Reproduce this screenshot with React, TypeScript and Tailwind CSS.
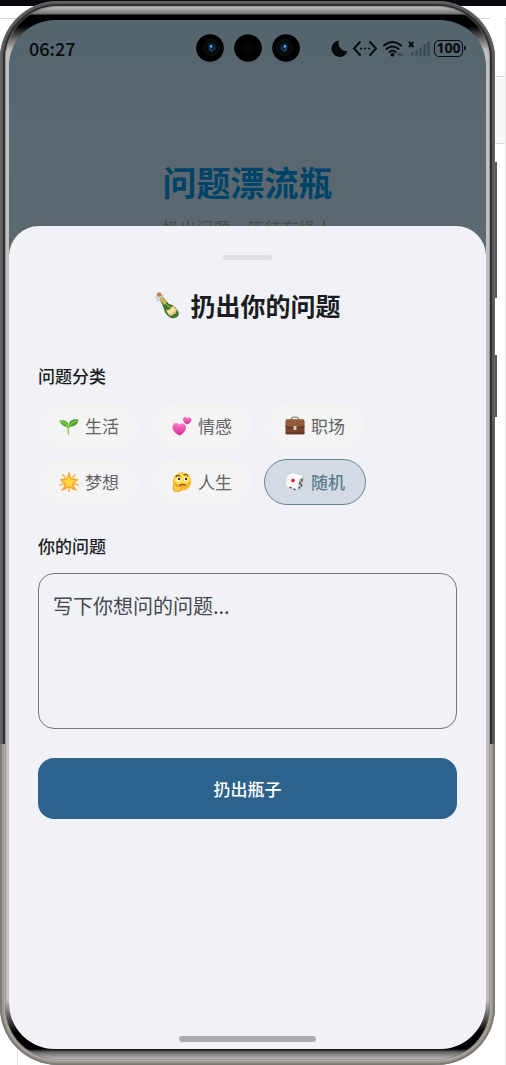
import { useState } from 'react'
import type { ReactNode } from 'react'
import clsx from 'clsx'

function Bottle() {
  return (
    <svg viewBox="0 0 26 28" className="h-7 w-[26px]" aria-hidden="true">
      <path d="M1 3l3 1 1-3 2 3 3-1-1 4 2 1-3 1-1 3-2-2-3 1 1-3-3-2 3-1z" fill="#d5d0d2" />
      <path d="M3 2l3-1 2 3-2 2-3-1z" fill="#b98750" />
      <path d="M6 8l3-2 6 7q6 1 9 7 2 4-1 6t-6 1q-6-3-7-9z" fill="#42762c" />
      <path d="M6 8l3-2 4 5-3 3z" fill="#d9b554" />
      <path d="M11 12l3 3q5 1 8 8" stroke="#a5c768" strokeWidth="1" fill="none" />
      <path d="M12 19q5 0 7-5l4 5q-2 5-7 6-3-3-4-6z" fill="#e7c781" />
      <path d="M13 20q4 0 6-4l2 3q-2 3-6 4z" fill="#f7e5ae" />
    </svg>
  )
}

function Seedling() {
  return (
    <svg viewBox="0 0 20 20" className="h-5 w-5" aria-hidden="true">
      <path d="M9.500 18C9 13 9.400 11 8 7.500M9.500 12Q11 8 14 7" fill="none" stroke="#8bc53f" strokeWidth="1.400" strokeLinecap="round" />
      <path d="M.5 4.500q7-1.500 9 3.500 0 2-1 3Q2.500 11 .5 4.500z" fill="#57ad2e" />
      <path d="M19.500 3.500q-8.500-1-9.500 4.500 0 2 1 2.800Q18.500 10.500 19.500 3.500z" fill="#4ba029" />
      <path d="M2 5.500q5 1 6.500 4.500M18 4.800q-5 1-7 4.700" stroke="#a6dc62" fill="none" />
    </svg>
  )
}

function Hearts() {
  return (
    <svg viewBox="0 0 20 20" className="h-5 w-5" aria-hidden="true">
      <defs>
        <linearGradient id="pink" x1="0" y1="0" x2="0" y2="1">
          <stop stopColor="#fa7ec4" />
          <stop offset="1" stopColor="#dc2496" />
        </linearGradient>
      </defs>
      <path d="M8 19.500C3 17.500 0 14 .5 10.500 1 6.500 5.500 6 7 9c2.500-3 7.500-1 7 3-.3 3-3 5.500-6 7.500z" fill="url(#pink)" />
      <path d="M15 8.500c-2.500-1.500-4.500-3.500-4-5.500.5-2.500 3.500-2.500 4-.5 1.500-2 4.800-1 4.500 1.500-.2 2-2.500 3.500-4.500 4.500z" fill="url(#pink)" />
    </svg>
  )
}

function Briefcase() {
  return (
    <svg viewBox="0 0 20 20" className="h-5 w-5" aria-hidden="true">
      <path d="M6 4q0-3 4-3t4 3" fill="none" stroke="#827066" strokeWidth="1.200" />
      <rect x=".5" y="3.500" width="19" height="15" rx="1.500" fill="#79452c" />
      <path d="M1 4.500q0-1 1-1h16q1 0 1 1v6q-9 3-18 0z" fill="#945a3b" />
      <path d="M.5 10.500q9.500 3 19 0" fill="none" stroke="#4c2b1c" />
      <path d="M.5 17h19" stroke="#57301f" />
      <rect x="8.500" y="10" width="3" height="4" rx="1" fill="#ced1d2" />
    </svg>
  )
}

function Star() {
  return (
    <svg viewBox="0 0 20 20" className="h-5 w-5" aria-hidden="true">
      <path d="M10 1v3M4 3l2 2M16 3l-2 2M1 13l3-1M19 13l-3-1M10 19v-2M3 18l2-2M17 18l-2-2" stroke="#f1b044" strokeWidth="1.700" strokeLinecap="round" />
      <path d="M10 2l2.500 4.800 6.500.7-4.700 4.200 1.200 6L10 15l-5.500 2.700 1.200-6L1 7.500l6.500-.7z" fill="#f9ad20" stroke="#f4a02b" strokeLinejoin="round" />
      <path d="M10 4l2 4 4.500.5-3.500 3 .8 4L10 13.500 6.200 15.500l.8-4-3.500-3L8 8z" fill="#ffd744" />
    </svg>
  )
}

function Thinking() {
  return (
    <svg viewBox="0 0 20 20" className="h-5 w-5" aria-hidden="true">
      <circle cx="10" cy="9.500" r="9.300" fill="#f9bd2f" />
      <ellipse cx="10" cy="7" rx="8" ry="6" fill="#ffdc52" />
      <path d="M4 4.500q2-2 4-.5M12 3q3-1.500 4 1M7.500 13.500q3-2 6-.5" fill="none" stroke="#754619" strokeWidth="1.200" strokeLinecap="round" />
      <ellipse cx="6.500" cy="7.500" rx="1.900" ry="2.100" fill="#fff" />
      <ellipse cx="13.500" cy="7.500" rx="1.900" ry="2.100" fill="#fff" />
      <circle cx="7" cy="7" r="1.200" fill="#4c2c15" />
      <circle cx="14" cy="7" r="1.200" fill="#4c2c15" />
      <path d="M2 12q1-1 2 0l1 3 5-1.500q2 0 1 1.500l-2 1q1 3-3 4-5 0-5-4z" fill="#ffc943" stroke="#d98820" strokeWidth=".7" />
    </svg>
  )
}

function Dice() {
  return (
    <svg viewBox="0 0 20 20" className="h-5 w-5" aria-hidden="true">
      <path d="M5 1.500Q6 .8 8 1.200L17 3.500q2 .6 1.900 2.500l-1.400 8q-.3 1.200-1.500 2l-3 2.500q-1 .8-2.500.3L3 15.500q-1.500-.5-1.500-2L2 5z" fill="#bfc1c4" />
      <path d="M5.500 1.500Q6.500 1 8 1.300L17 3.600q1.200.5.500 1.400L14 7.500 3 4z" fill="#fff" />
      <path d="M3.500 3.500l9 2.500q1.800.5 1.600 2.300l-1.400 8.500q-.4 1.800-2 1.300L2.700 15.300q-1.700-.5-1.500-2.300l.6-8q.2-1.900 1.700-1.500z" fill="#f7f7f8" />
      <circle cx="8" cy="8.500" r="1.800" fill="#d51e34" />
      <path d="M16.800 7.500v1.500M15 10.500v1.500M16.500 13v1M14.500 15.500v.500M5 15.500l1 .3M9 17l1 .3" stroke="#343538" strokeWidth="1.300" strokeLinecap="round" />
    </svg>
  )
}

const categories: { name: string; icon: ReactNode }[] = [
  { name: '生活', icon: <Seedling /> },
  { name: '情感', icon: <Hearts /> },
  { name: '职场', icon: <Briefcase /> },
  { name: '梦想', icon: <Star /> },
  { name: '人生', icon: <Thinking /> },
  { name: '随机', icon: <Dice /> },
]

function Camera({ lens, flip }: { lens?: boolean; flip?: boolean }) {
  return (
    <svg viewBox="0 0 28 28" className={clsx('h-7 w-7', flip && '-scale-x-100')} aria-hidden="true">
      <circle cx="14" cy="14" r="13.800" fill="#000" />
      {lens ? (
        <>
          <circle cx="15.500" cy="13.500" r="8" fill="#07090c" stroke="#101214" />
          <circle cx="16" cy="13" r="4.500" fill="#0b1a2c" />
          <path d="M13.500 14.500q1 2.500 3.500 2.500" stroke="#1f4c80" strokeWidth="1.200" fill="none" />
          <circle cx="15" cy="12.500" r="1.700" fill="#296eb0" />
          <circle cx="15" cy="12" r=".8" fill="#c4e6ff" />
          <circle cx="18" cy="14" r="1" fill="#1d4674" />
        </>
      ) : (
        <circle cx="14" cy="14" r="6" fill="#070707" />
      )}
    </svg>
  )
}

function StatusIcons() {
  return (
    <div className="flex items-center justify-end gap-1 text-[#080b0d]">
      <svg viewBox="0 0 17 17" className="h-[17px] w-[17px]" aria-hidden="true">
        <path d="M8 .5A8.200 8.200 0 1 0 16.500 11 8 8 0 0 1 8 .5z" fill="currentColor" />
      </svg>
      <svg viewBox="0 0 26 17" className="h-[17px] w-[26px]" aria-hidden="true">
        <path d="M8 2L2 8.500 8 15M18 2l6 6.500L18 15" fill="none" stroke="currentColor" strokeWidth="1.900" strokeLinecap="round" />
        <path d="M9 8.500h.1M13 8.500h.1M17 8.500h.1" stroke="currentColor" strokeWidth="2" strokeLinecap="round" />
      </svg>
      <svg viewBox="0 0 22 17" className="h-[17px] w-[22px]" aria-hidden="true">
        <path d="M2 5.500q8.500-7 17 0M4.500 9q6-5 12 0M7.500 12q3-2.500 6 0" fill="none" stroke="currentColor" strokeWidth="2" strokeLinecap="round" />
        <circle cx="10.500" cy="14.700" r="1.900" fill="currentColor" />
        <ellipse cx="18" cy="14.500" rx="3" ry="1.700" fill="#3e4c55" />
      </svg>
      <svg viewBox="0 0 22 17" className="h-[17px] w-[22px]" aria-hidden="true">
        <path d="M1 2l4.500 5M5.500 2L1 7" stroke="currentColor" strokeWidth="2" />
        <path d="M4.500 13v2M8.500 11v4M12.500 8.500V15M16.500 5.500V15M20.500 2.500V15" stroke="#3b4952" strokeWidth="2.400" strokeLinecap="round" />
      </svg>
      <div className="flex items-center">
        <span className="flex h-[17px] w-[29px] items-center justify-center rounded-[5px] border border-current font-['Noto_Sans',sans-serif] text-[14px] leading-none font-bold">
          100
        </span>
        <span className="ml-px h-1 w-0.5 rounded-r bg-current" />
      </div>
    </div>
  )
}

// window edges visible around the phone
function Backdrop() {
  return (
    <div className="absolute inset-0 -z-10 flex flex-col" aria-hidden="true">
      <div className="h-1.5 bg-[#08070d]" />
      <div className="h-3 bg-white" />
      <div className="flex grow border-t border-[#d8d8d8]">
        <div className="ml-[17px] grow border-l border-[#dedede] bg-white" />
        <div className="flex w-4 flex-col border-r border-[#e5e5e5]">
          <div className="-mt-px h-[58px] bg-white" />
          <div className="h-[68px] border-y border-[#dadada] bg-[#f8f8f8]" />
        </div>
      </div>
    </div>
  )
}

function QuestionSheet() {
  const [selected, setSelected] = useState('随机')
  const [question, setQuestion] = useState('')

  return (
    <section className="relative flex grow flex-col rounded-t-[30px] bg-[#f0f2f8] px-[29px]">
      <div className="mx-auto mt-[29px] h-[5px] w-[49px] rounded-full bg-[#dfe0e1]" />
      <h2 className="mt-[25px] flex items-center justify-center gap-2.5 text-[25px] leading-10 font-bold text-[#1a1c20]">
        <Bottle />
        扔出你的问题
      </h2>

      <form className="mt-[39px]" onSubmit={(e) => e.preventDefault()}>
        <fieldset>
          <legend className="text-[17px] leading-6 font-medium text-[#1a1c20]">问题分类</legend>
          <div className="mt-[15px] flex flex-wrap gap-x-[11px] gap-y-2.5">
            {categories.map((c) => (
              <button
                key={c.name}
                type="button"
                aria-pressed={selected === c.name}
                onClick={() => setSelected(c.name)}
                className={clsx(
                  'flex h-[46px] items-center gap-1.5 rounded-full border px-5 text-[17px]',
                  selected === c.name
                    ? 'border-[#668594] bg-[#d3dae3] font-medium text-[#5d7e8d]'
                    : 'border-[#f4f4f5] bg-[#f4f4f5] text-[#626262]',
                )}
              >
                {c.icon}
                {c.name}
              </button>
            ))}
          </div>
        </fieldset>

        <label htmlFor="question" className="mt-[29px] block text-[17px] leading-6 font-medium text-[#1a1c20]">
          你的问题
        </label>
        <textarea
          id="question"
          value={question}
          onChange={(e) => setQuestion(e.target.value)}
          placeholder="写下你想问的问题..."
          className="mt-[15px] block h-[156px] w-full resize-none rounded-2xl border border-[#74777f] px-3.5 py-[17px] text-[20px] leading-[30px] text-[#1a1c20] placeholder:text-[#44474e]"
        />
        <button
          type="submit"
          className="mt-[29px] h-[61px] w-full rounded-2xl bg-[#2d628c] text-[17px] font-medium text-white"
        >
          扔出瓶子
        </button>
      </form>

      <div className="mx-auto mt-auto mb-[7px] h-1.5 w-[137px] rounded-full bg-[#a9abb0]" />
    </section>
  )
}

export default function App() {
  return (
    <div className="relative isolate flex min-h-screen overflow-hidden bg-white pt-px pr-[11px] font-['Noto_Sans_CJK_SC',sans-serif]">
      <Backdrop />
      <div className="relative flex grow rounded-[58px] bg-[linear-gradient(#2b2c2e_0%,#2b2c2e_69.8%,#b8afa1_69.8%)] p-[5px] shadow-[inset_0_0_0_1px_#77777788,inset_0_0_0_2px_#55555566,inset_0_0_0_3px_#99999966,inset_0_0_0_4px_#44444433]">
        {/* side keys */}
        <div className="absolute top-[161px] -right-0.5 h-[136px] w-0.5 bg-[#55575a]" />
        <div className="absolute top-[354px] -right-0.5 h-[62px] w-0.5 bg-[#55575a]" />

        <div className="flex grow rounded-[53px] bg-[linear-gradient(#c8c8c8_0px,#707070_8px,#000_9px,#000_20px,#c2c0bf_44px,#c2c0bf_calc(100%-60px),#000_calc(100%-28px),#000_calc(100%-11px),#666_calc(100%-8px),#c2c3c2_100%)] px-1 pt-3.5 pb-[11px] shadow-[inset_0_0_0_1px_#77777788]">
          <main className="flex grow flex-col overflow-hidden rounded-[46px] bg-[linear-gradient(#53656f,#5b6770_110px,#5d6a71_240px)]">
            <header className="h-[206px]">
              <div className="grid h-14 grid-cols-[1fr_auto_1fr] items-center px-5">
                <time className="text-[18px] leading-6 font-medium text-[#080b0d]">06:27</time>
                <div className="flex gap-2.5">
                  <Camera lens />
                  <Camera />
                  <Camera lens flip />
                </div>
                <StatusIcons />
              </div>
              <h1 className="mt-[81px] text-center text-[34px] leading-[50px] font-bold text-[#004368]">问题漂流瓶</h1>
              <p className="mt-[9px] text-center text-[17px] leading-6 text-[#484b4e]">扔出问题，等待有缘人</p>
            </header>
            <QuestionSheet />
          </main>
        </div>
      </div>
    </div>
  )
}
